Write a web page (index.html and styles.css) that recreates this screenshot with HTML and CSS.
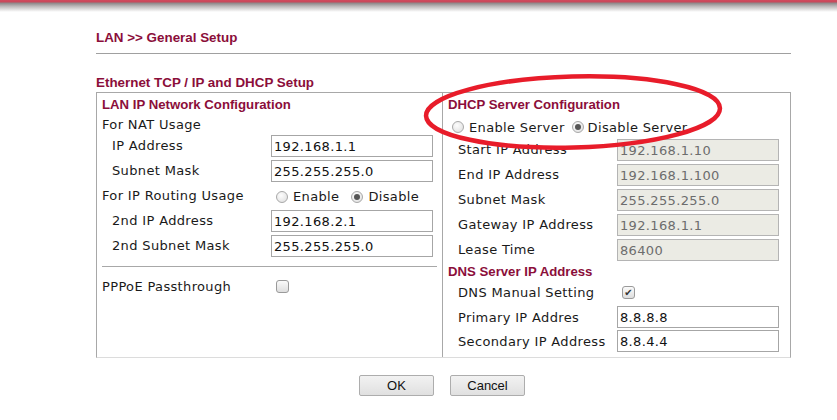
FILE: index.html
```html
<!DOCTYPE html>
<html lang="en">
<head>
    <meta charset="UTF-8">
    <title>LAN &gt;&gt; General Setup</title>
    <link rel="stylesheet" href="styles.css">
</head>
<body>
    <div class="top-bar"></div>

    <div class="page">
        <h2 class="page-title">LAN &gt;&gt; General Setup</h2>
        <h3 class="section-title">Ethernet TCP / IP and DHCP Setup</h3>

        <div class="setup-box">
            <div class="col col-left">
                <div class="row head">LAN IP Network Configuration</div>
                <div class="row sub">For NAT Usage</div>
                <div class="row field">
                    <span class="label indent">IP Address</span>
                    <input class="text-in" type="text" value="192.168.1.1">
                </div>
                <div class="row field">
                    <span class="label indent">Subnet Mask</span>
                    <input class="text-in" type="text" value="255.255.255.0">
                </div>
                <div class="row field">
                    <span class="label">For IP Routing Usage</span>
                    <span class="radios">
                        <span class="radio"></span>Enable
                        <span class="radio checked"></span>Disable
                    </span>
                </div>
                <div class="row field">
                    <span class="label indent">2nd IP Address</span>
                    <input class="text-in" type="text" value="192.168.2.1">
                </div>
                <div class="row field">
                    <span class="label indent">2nd Subnet Mask</span>
                    <input class="text-in" type="text" value="255.255.255.0">
                </div>
                <div class="divider"></div>
                <div class="row field">
                    <span class="label">PPPoE Passthrough</span>
                    <span class="check"></span>
                </div>
            </div>

            <div class="col col-right">
                <div class="row head">DHCP Server Configuration</div>
                <div class="row radio-row">
                    <span class="radio first"></span>Enable Server
                    <span class="radio checked"></span>Disable Server
                </div>
                <div class="row field">
                    <span class="label">Start IP Address</span>
                    <input class="text-in off" type="text" value="192.168.1.10" disabled>
                </div>
                <div class="row field">
                    <span class="label">End IP Address</span>
                    <input class="text-in off" type="text" value="192.168.1.100" disabled>
                </div>
                <div class="row field">
                    <span class="label">Subnet Mask</span>
                    <input class="text-in off" type="text" value="255.255.255.0" disabled>
                </div>
                <div class="row field">
                    <span class="label">Gateway IP Address</span>
                    <input class="text-in off" type="text" value="192.168.1.1" disabled>
                </div>
                <div class="row field">
                    <span class="label">Lease Time</span>
                    <input class="text-in off" type="text" value="86400" disabled>
                </div>
                <div class="row head dns">DNS Server IP Address</div>
                <div class="row field">
                    <span class="label">DNS Manual Setting</span>
                    <span class="check checked">&#10004;</span>
                </div>
                <div class="row field short">
                    <span class="label">Primary IP Addres</span>
                    <input class="text-in" type="text" value="8.8.8.8">
                </div>
                <div class="row field short">
                    <span class="label">Secondary IP Address</span>
                    <input class="text-in" type="text" value="8.8.4.4">
                </div>
            </div>

            <!-- hand-drawn highlight around the DHCP header -->
            <svg class="marker" width="310" height="90" viewBox="0 0 310 90">
                <ellipse cx="152" cy="44" rx="147" ry="35.5" fill="none" stroke="#e81c2a" stroke-width="4.5" transform="rotate(-1.5 152 44)"/>
            </svg>
        </div>

        <div class="buttons">
            <button class="btn">OK</button>
            <button class="btn">Cancel</button>
        </div>
    </div>
</body>
</html>
```

FILE: styles.css
```css
body {
    margin: 0;
    background: #fff;
    font-family: "DejaVu Sans", Verdana, sans-serif;
    font-size: 13px;
    letter-spacing: 0.35px;
    color: #1a1a1a;
}

.top-bar {
    height: 12px;
    background: linear-gradient(to bottom, #d24a5e 0, #c8485a 2px, #8d8688 3px, #b8b4b5 6px, #fff 12px);
}

.page {
    margin-left: 96px;
    width: 695px;
}

.page-title {
    margin: 18px 0 0;
    padding-bottom: 7px;
    border-bottom: 1px solid #a0a0a0;
    font-family: "Liberation Sans", Arial, sans-serif;
    font-size: 13.4px;
    font-weight: bold;
    letter-spacing: 0;
    color: #8b0e3a;
    line-height: 16px;
}

.section-title {
    margin: 21px 0 0;
    font-family: "Liberation Sans", Arial, sans-serif;
    font-size: 13.4px;
    font-weight: bold;
    letter-spacing: 0;
    color: #8b0e3a;
    line-height: 16px;
}

.setup-box {
    position: relative;
    display: flex;
    margin-top: 1px;
    border: 1px solid #a8a8a8;
    border-bottom-color: #dcdcdc;
}

.col {
    display: flex;
    flex-direction: column;
    padding-bottom: 4px;
}

.col-left {
    width: 340px;
    padding-left: 5px;
    border-right: 1px solid #a8a8a8;
}

.col-right {
    flex: 1;
    padding-left: 5px;
}

.row {
    display: flex;
    align-items: center;
    height: 25px;
}

.head {
    height: 22px;
    font-family: "Liberation Sans", Arial, sans-serif;
    font-size: 13.2px;
    font-weight: bold;
    letter-spacing: 0;
    color: #8b0e3a;
}

.sub {
    height: 18px;
}

.radio-row {
    height: 22px;
    padding-top: 2px;
    box-sizing: border-box;
}

.dns {
    height: 18px;
}

.short {
    height: 24px;
}

.label {
    width: 169px;
    flex: none;
}

.indent {
    padding-left: 10px;
    width: 159px;
}

.col-right .label {
    padding-left: 10px;
    width: 159px;
}

.text-in {
    box-sizing: border-box;
    width: 162px;
    height: 22px;
    padding: 1px 2px 0;
    border: 1px solid #a6a6a6;
    background: #fff;
    font-family: "DejaVu Sans", Verdana, sans-serif;
    font-size: 13px;
    letter-spacing: 0.35px;
    color: #111;
    outline: none;
}

.text-in.off {
    background: #ebebe4;
    color: #6d6d6d;
    border-color: #b4b4b4;
}

.radios {
    display: flex;
    align-items: center;
    padding-left: 5px;
    padding-top: 2px;
}

.radio {
    display: inline-block;
    box-sizing: border-box;
    width: 12px;
    height: 12px;
    margin-right: 5px;
    border: 1px solid #a8a8a8;
    border-radius: 50%;
    background: radial-gradient(circle at 40% 35%, #fdfdfd, #dcdcdc);
    position: relative;
}

.radio.checked::after {
    content: "";
    position: absolute;
    left: 2px;
    top: 2px;
    width: 6px;
    height: 6px;
    border-radius: 50%;
    background: #555;
}

.radio-row .radio.first {
    margin-left: 4px;
}

.radios .radio.checked {
    margin-left: 12px;
}

.radio-row .radio.checked {
    margin-left: 7px;
    margin-right: 4px;
}

.check {
    display: inline-block;
    box-sizing: border-box;
    width: 13px;
    height: 13px;
    margin-left: 5px;
    border: 1px solid #9a9a9a;
    border-radius: 3px;
    background: linear-gradient(#fafafa, #dedede);
    font-size: 10px;
    line-height: 11px;
    letter-spacing: 0;
    text-align: center;
    color: #333;
}

.divider {
    height: 1px;
    margin: 8px 5px 7px 0;
    background: #a8a8a8;
}

.marker {
    position: absolute;
    left: 324px;
    top: -25px;
    pointer-events: none;
}

.buttons {
    display: flex;
    justify-content: center;
    gap: 16px;
    margin-top: 17px;
    padding-right: 3px;
}

.btn {
    width: 75px;
    height: 21px;
    border: 1px solid #adadad;
    border-radius: 2px;
    background: linear-gradient(#f2f2f2, #e0e0e0);
    font-family: "Liberation Sans", Arial, sans-serif;
    font-size: 13px;
    color: #111;
    padding: 0;
}
```
